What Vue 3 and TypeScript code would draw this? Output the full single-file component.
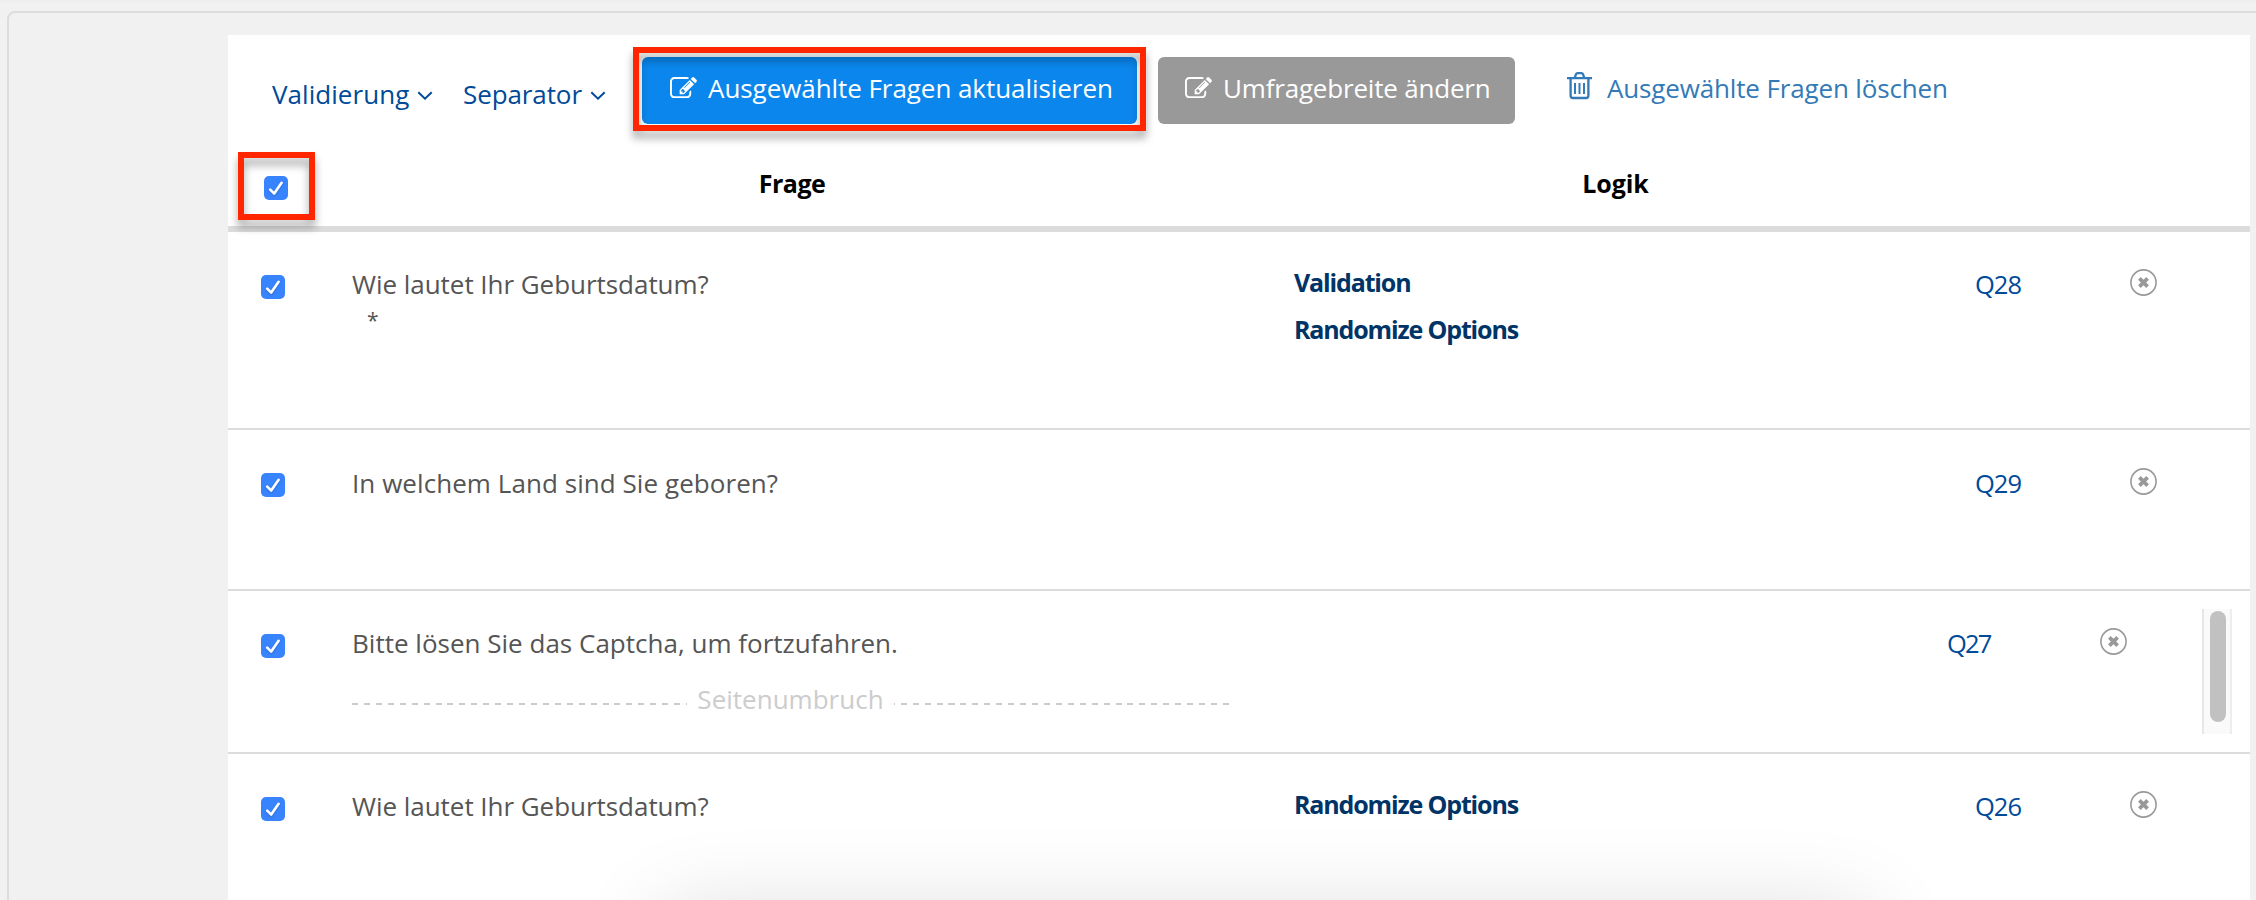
<script setup lang="ts">
import { ref } from 'vue'

interface Question {
  code: string
  text: string
  height: 'tall' | 'short' | 'medium' | 'last'
  required?: boolean
  pageBreak?: boolean
  scrollable?: boolean
  logic: string[]
  checked: boolean
}

const editPath =
  'M888 1184l116-116-152-152-116 116v56h96v96h56zm440-720q-16-16-33 1l-350 350q-17 17-1 33t33-1l350-350q17-17 1-33zm80 594v190q0 119-84.5 203.5t-203.5 84.5h-832q-119 0-203.5-84.5t-84.5-203.5v-832q0-119 84.5-203.5t203.5-84.5h832q63 0 117 25 15 7 18 23 3 17-9 29l-49 49q-14 14-32 8-23-6-45-6h-832q-66 0-113 47t-47 113v832q0 66 47 113t113 47h832q66 0 113-47t47-113v-126q0-13 9-22l64-64q15-15 35-7t20 29zm-96-738l288 288-672 672h-288v-288zm444 132l-92 92-288-288 92-92q28-28 68-28t68 28l152 152q28 28 28 68t-28 68z'

const allChecked = ref(true)
const questions = ref<Question[]>([
  { code: 'Q28', text: 'Wie lautet Ihr Geburtsdatum?', height: 'tall', required: true, logic: ['Validation', 'Randomize Options'], checked: true },
  { code: 'Q29', text: 'In welchem Land sind Sie geboren?', height: 'short', logic: [], checked: true },
  { code: 'Q27', text: 'Bitte lösen Sie das Captcha, um fortzufahren.', height: 'medium', pageBreak: true, scrollable: true, logic: [], checked: true },
  { code: 'Q26', text: 'Wie lautet Ihr Geburtsdatum?', height: 'last', logic: ['Randomize Options'], checked: true },
])

function toggleAll() {
  allChecked.value = !allChecked.value
  questions.value.forEach((q) => (q.checked = allChecked.value))
}
</script>

<template>
  <div class="page">
    <div class="frame">
      <main class="panel">
        <div class="toolbar">
          <a class="menu validation">
            <span>Validierung</span>
            <svg width="16" height="9" viewBox="0 0 16 9"><path d="M1.3 1.2 8 7.6l6.7-6.4" /></svg>
          </a>
          <a class="menu separator">
            <span>Separator</span>
            <svg width="16" height="9" viewBox="0 0 16 9"><path d="M1.3 1.2 8 7.6l6.7-6.4" /></svg>
          </a>
          <div class="highlighted">
            <button class="btn primary">
              <svg class="edit" viewBox="0 128 1792 1408"><path :d="editPath" /></svg>
              <span>Ausgewählte Fragen aktualisieren</span>
            </button>
            <i class="marker button-marker"></i>
          </div>
          <button class="btn muted">
            <svg class="edit" viewBox="0 128 1792 1408"><path :d="editPath" /></svg>
            <span>Umfragebreite ändern</span>
          </button>
          <a class="delete">
            <svg width="25" height="28" viewBox="0 0 25 28">
              <path d="M0 6.1h25M7.8 5.6 9 2.2q.4-1 1.5-1h4q1.1 0 1.5 1l1.2 3.4M3.6 6.5V23.500q0 2.500 2.200 2.500h13.400q2.200 0 2.200-2.500V6.500" />
              <path class="slats" d="M8 11v11M12.500 11v11M17 11v11" />
            </svg>
            <span>Ausgewählte Fragen löschen</span>
          </a>
        </div>

        <div class="head">
          <div class="head-check">
            <button class="check" :class="{ on: allChecked }" @click="toggleAll">
              <svg v-if="allChecked" viewBox="0 0 24 24"><path d="M6.200 13.600 10.200 17.600 17.600 6.800" /></svg>
            </button>
            <i class="marker check-marker"></i>
          </div>
          <div class="th">Frage</div>
          <div class="th logic-th">Logik</div>
        </div>

        <div v-for="q in questions" :key="q.code" class="row" :class="[q.height, { scrollable: q.scrollable }]">
          <button class="check" :class="{ on: q.checked }" @click="q.checked = !q.checked">
            <svg v-if="q.checked" viewBox="0 0 24 24"><path d="M6.200 13.600 10.200 17.600 17.600 6.800" /></svg>
          </button>
          <div class="question">
            <div>{{ q.text }}</div>
            <div v-if="q.required" class="required">*</div>
            <div v-if="q.pageBreak" class="break"><span>Seitenumbruch</span></div>
          </div>
          <div class="logic">
            <div v-for="l in q.logic" :key="l">{{ l }}</div>
          </div>
          <a class="code">{{ q.code }}</a>
          <svg class="remove" viewBox="0 0 27 27">
            <circle cx="13.500" cy="13.500" r="12.600" />
            <path d="M9.400 9.400l8.200 8.200M17.600 9.400l-8.200 8.200" />
          </svg>
          <div v-if="q.scrollable" class="track"><div class="thumb"></div></div>
        </div>
      </main>
    </div>
    <div class="glow"></div>
  </div>
</template>

<style>
html,
body {
  margin: 0;
  overflow: hidden;
  background: #f1f1f1;
}
</style>

<style scoped>
.page {
  position: relative;
  box-sizing: border-box;
  width: 2256px;
  height: 900px;
  padding: 11px 0 0 7px;
  overflow: hidden;
  background: linear-gradient(#ededed, #f1f1f1 3px);
  color: #555;
  font: 26px/32px "Open Sans", "Noto Sans", sans-serif;
}
.frame {
  box-sizing: border-box;
  width: 2270px;
  height: 920px;
  padding: 22px 0 0 219px;
  border: 2px solid #dcdcdc;
  border-radius: 8px;
}
.panel {
  width: 2022px;
  height: 900px;
  background: #fff;
}
button {
  margin: 0;
  border: 0;
  font: inherit;
}
svg {
  display: block;
  flex: none;
}
.toolbar {
  display: flex;
  align-items: flex-start;
  height: 111px;
  padding-left: 44px;
  white-space: nowrap;
}
.menu {
  display: flex;
  align-items: flex-start;
  margin-top: 43px;
  color: #004a99;
}
.menu svg {
  fill: none;
  stroke: currentColor;
  stroke-width: 2;
  margin-top: 13px;
}
.validation {
  width: 191px;
}
.validation span {
  width: 145px;
  letter-spacing: 0.05px;
}
.separator {
  width: 179px;
}
.separator span {
  width: 127px;
  letter-spacing: -0.1px;
}
.highlighted {
  position: relative;
  margin-top: 22px;
}
.btn {
  display: flex;
  align-items: flex-start;
  box-sizing: border-box;
  height: 67px;
  padding: 15px 0 0 28px;
  border-radius: 6px;
  color: #fff;
}
.edit {
  width: 27px;
  height: 21.2px;
  margin-top: 5px;
  fill: currentColor;
}
.primary {
  width: 495px;
  background: #0b86ec;
}
.primary span {
  margin-left: 11px;
  letter-spacing: -0.06px;
}
.muted {
  width: 357px;
  margin: 22px 0 0 21px;
  padding-left: 27px;
  background: #999;
}
.muted span {
  margin-left: 11px;
  letter-spacing: -0.19px;
}
.delete {
  display: flex;
  margin: 37px 0 0 52px;
  color: #337ab7;
}
.delete svg {
  fill: none;
  stroke: currentColor;
  stroke-width: 2.3;
}
.delete .slats {
  stroke-width: 2;
}
.delete span {
  margin-left: 15px;
  letter-spacing: -0.15px;
}
.marker {
  position: absolute;
  box-sizing: border-box;
  border: 6px solid #ff2600;
  filter: drop-shadow(0 7px 4px rgba(0, 0, 0, 0.35));
  pointer-events: none;
  z-index: 2;
}
.button-marker {
  inset: -10px -9px -7px -9px;
}
.check-marker {
  left: -26px;
  top: -24px;
  width: 77px;
  height: 68px;
}
.head {
  display: grid;
  grid-template-columns: 91px 941px 646px;
  box-sizing: border-box;
  height: 86px;
  padding-left: 33px;
  border-bottom: 6px solid #dcdcdc;
}
.head-check {
  position: relative;
  width: 24px;
  height: 24px;
  margin: 30px 0 0 3px;
}
.th {
  width: 880px;
  padding-top: 21px;
  text-align: center;
  color: #000;
  font-size: 25px;
  font-weight: 700;
  letter-spacing: -0.5px;
}
.logic-th {
  width: 645px;
  letter-spacing: -0.1px;
}
.check {
  display: block;
  width: 24px;
  height: 24px;
  padding: 0;
  border-radius: 5px;
  background: #ddd;
}
.check.on {
  background: #3884fe;
}
.check svg {
  fill: none;
  stroke: #fff;
  stroke-width: 2.6;
  stroke-linecap: round;
  stroke-linejoin: round;
  filter: drop-shadow(0 1px 1px rgba(0, 0, 0, 0.2));
}
.row {
  display: grid;
  grid-template-columns: 91px 942px 681px 155px 27px;
  align-items: start;
  box-sizing: border-box;
  padding-left: 33px;
  border-bottom: 2px solid #dcdcdc;
}
.row.scrollable {
  grid-template-columns: 91px 942px 653px 153px 27px 75px 30px;
}
.row .check {
  margin-top: 43px;
}
.tall {
  height: 198px;
}
.short {
  height: 161px;
}
.medium {
  height: 163px;
}
.last {
  height: 181px;
}
.question {
  width: 877px;
  padding-top: 36px;
  letter-spacing: -0.04px;
}
.medium .question {
  letter-spacing: 0.01px;
}
.short .question {
  padding-top: 37px;
  letter-spacing: 0.06px;
}
.required {
  margin: 4px 0 0 15px;
  font-size: 21px;
}
.break {
  position: relative;
  margin-top: 24px;
  text-align: center;
  color: #ccc;
}
.break::before {
  content: "";
  position: absolute;
  left: 0;
  right: 0;
  top: 20px;
  height: 2px;
  background: repeating-linear-gradient(90deg, #ccc 0 6px, transparent 6px 11.93px);
}
.break span {
  position: relative;
  display: inline-block;
  width: 207px;
  background: #fff;
}
.logic {
  padding-top: 27px;
  color: #003366;
  font-size: 25px;
  font-weight: 700;
  line-height: 47px;
  letter-spacing: -1.15px;
}
.code {
  margin-top: 36px;
  color: #004a99;
  font-size: 25.5px;
  letter-spacing: -1px;
}
.short .code {
  margin-top: 37px;
}
.scrollable .code {
  letter-spacing: -1.8px;
}
.remove {
  width: 27px;
  height: 27px;
  margin-top: 37px;
  fill: none;
  stroke: #999;
  stroke-width: 1.6;
}
.short .remove {
  margin-top: 38px;
}
.remove path {
  stroke-width: 3.8;
}
.track {
  grid-column: 7;
  box-sizing: border-box;
  width: 30px;
  height: 125px;
  margin-top: 18px;
  padding: 2px 0 0 6px;
  border-left: 2px solid #e7e7e7;
  border-right: 2px solid #ededed;
  background: #fafafa;
}
.thumb {
  width: 16px;
  height: 111px;
  border-radius: 8px;
  background: #c1c1c1;
}
.glow {
  position: absolute;
  left: 660px;
  top: 912px;
  width: 1210px;
  height: 200px;
  border-radius: 12px;
  box-shadow: 0 0 90px rgba(0, 0, 0, 0.14);
}
</style>
